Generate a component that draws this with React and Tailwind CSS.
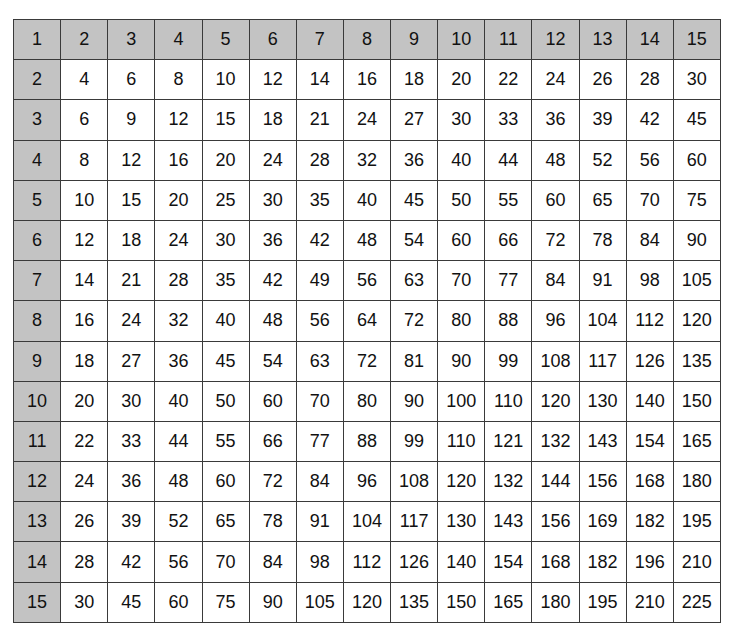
export default function App() {
  const nums = Array.from({ length: 15 }, (_, i) => i + 1);

  return (
    <div className="w-[736px] h-[630px] bg-white pl-[13px] pt-[19px]" style={{ fontFamily: '"Liberation Sans", Arial, sans-serif' }}>
      <table className="table-fixed border-collapse w-[708px] h-[604px] border border-[#3a3a3a] text-[18px] text-[#111]">
        <tbody>
          {nums.map((r) => (
            <tr key={r}>
              {nums.map((c) => {
                const head = r === 1 || c === 1;
                return (
                  <td
                    key={c}
                    className={`border border-[#3a3a3a] text-center align-middle p-0 ${head ? "bg-[#c3c3c3]" : "bg-white"}`}
                  >
                    {r * c}
                  </td>
                );
              })}
            </tr>
          ))}
        </tbody>
      </table>
    </div>
  );
}
